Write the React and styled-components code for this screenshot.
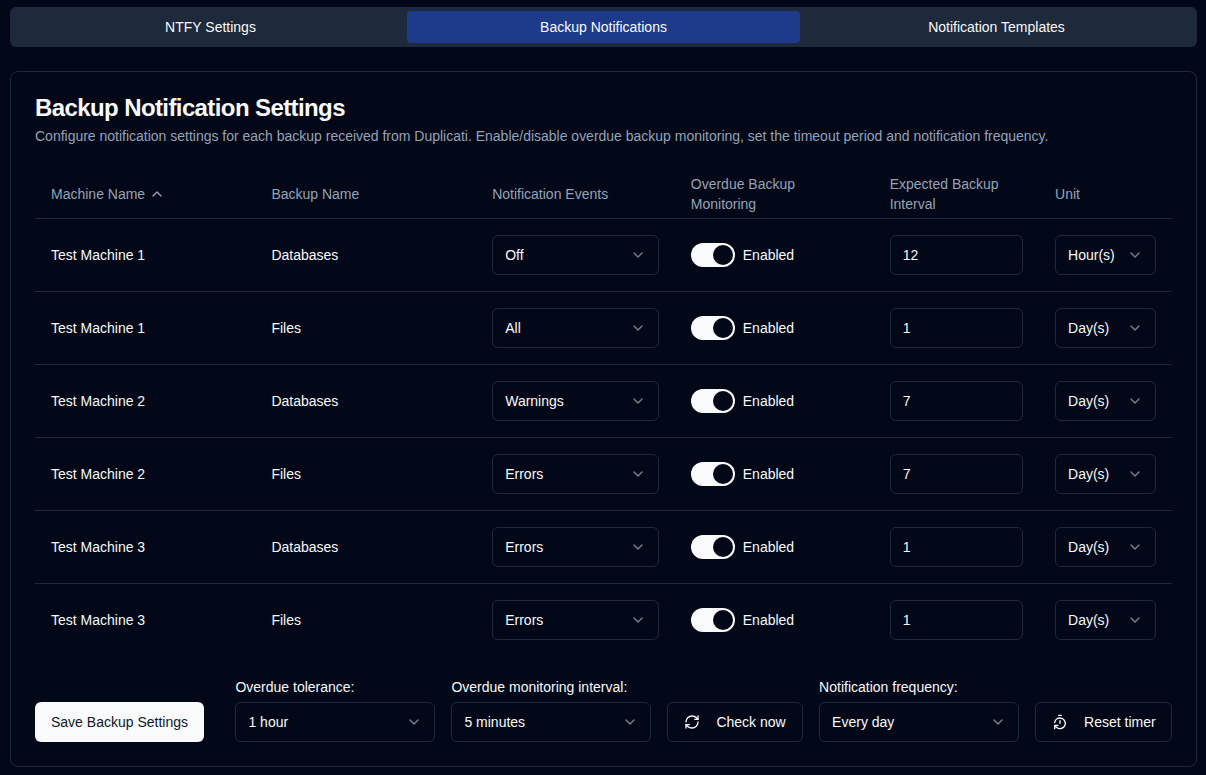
import React from "react";
import styled, { createGlobalStyle, ThemeProvider } from "styled-components";
import { ChevronDown, ChevronUp, RefreshCw, TimerReset } from "lucide-react";

const theme = {
  background: "#020817",
  foreground: "#f8fafc",
  muted: "#94a3b8",
  border: "#1e293b",
  tabs: "#1e293b",
  tabActive: "#1e3a8a",
  primary: "#f8fafc",
  primaryText: "#0f172a",
};

const GlobalStyle = createGlobalStyle`
  *, *::before, *::after { box-sizing: border-box; }
  body {
    margin: 0;
    overflow: hidden;
    background: ${theme.background};
    color: ${theme.foreground};
    font-family: "Liberation Sans", Arial, sans-serif;
    font-size: 14px;
    line-height: 20px;
  }
  button, input { font: inherit; color: inherit; }
  h1, p { margin: 0; }
`;

const Page = styled.main`
  display: flex;
  flex-direction: column;
  gap: 24px;
  width: 1206px;
  padding: 7px 9px 8px 10px;
`;

const Tabs = styled.nav`
  display: grid;
  grid-template-columns: repeat(3, 1fr);
  height: 40px;
  padding: 4px;
  border-radius: 6px;
  background: ${(p) => p.theme.tabs};
`;

const Tab = styled.button`
  border: 0;
  padding: 0 12px;
  border-radius: 4px;
  background: ${(p) => (p.$active ? p.theme.tabActive : "transparent")};
`;

const Card = styled.section`
  display: flex;
  flex-direction: column;
  padding: 24px;
  border: 1px solid ${(p) => p.theme.border};
  border-radius: 8px;
`;

const CardHeader = styled.header`
  display: flex;
  flex-direction: column;
  gap: 6px;
  padding-bottom: 24px;
`;

const Title = styled.h1`
  font-size: 24px;
  line-height: 24px;
  font-weight: 700;
  letter-spacing: -0.6px;
`;

const Description = styled.p`
  color: ${(p) => p.theme.muted};
  letter-spacing: -0.007px;
`;

const Row = styled.div`
  display: grid;
  grid-template-columns: 220.4px 220.8px 198.6px 198.9px 165.4px 1fr;
  align-items: center;
  border-bottom: 1px solid ${(p) => p.theme.border};
  &:last-child { border-bottom: 0; }
`;

const HeadRow = styled(Row)`
  height: 49px;
  color: ${(p) => p.theme.muted};
`;

const HeadCell = styled.div`
  display: flex;
  align-items: center;
  gap: 4px;
  padding: 0 16px;
`;

const Cell = styled.div`
  display: flex;
  align-items: center;
  gap: 8px;
  min-width: 0;
  padding: 16px;
`;

const SelectBox = styled.button`
  display: flex;
  align-items: center;
  justify-content: space-between;
  width: ${(p) => p.$width || "100%"};
  height: 40px;
  padding: 8px 12px;
  border: 1px solid ${(p) => p.theme.border};
  border-radius: 6px;
  background: transparent;
  white-space: nowrap;
  svg { opacity: 0.5; flex: none; }
`;

const NumberInput = styled.input`
  width: 100%;
  height: 40px;
  padding: 8px 12px;
  border: 1px solid ${(p) => p.theme.border};
  border-radius: 6px;
  background: transparent;
  outline: none;
`;

const SwitchTrack = styled.button`
  display: flex;
  flex: none;
  justify-content: flex-end;
  width: 44px;
  height: 24px;
  padding: 2px;
  border: 0;
  border-radius: 12px;
  background: ${(p) => p.theme.primary};
`;

const SwitchThumb = styled.span`
  width: 20px;
  height: 20px;
  border-radius: 50%;
  background: ${(p) => p.theme.background};
`;

const Footer = styled.footer`
  display: flex;
  align-items: flex-end;
  justify-content: space-between;
  padding-top: 24px;
`;

const FooterControls = styled.div`
  display: flex;
  align-items: flex-end;
  gap: 16px;
`;

const Field = styled.div`
  display: flex;
  flex-direction: column;
  gap: 8px;
`;

const Label = styled.label`
  line-height: 14px;
`;

const Button = styled.button`
  display: inline-flex;
  align-items: center;
  gap: 16px;
  width: ${(p) => p.$width || "auto"};
  height: 40px;
  padding: 8px 0 8px 16px;
  border: 1px solid ${(p) => p.theme.border};
  border-radius: 6px;
  background: transparent;
  white-space: nowrap;
`;

const PrimaryButton = styled(Button)`
  padding: 8px 16px;
  border: 0;
  background: ${(p) => p.theme.primary};
  color: ${(p) => p.theme.primaryText};
`;

const Select = ({ value, width }) => (
  <SelectBox type="button" $width={width}>
    <span>{value}</span>
    <ChevronDown size={16} />
  </SelectBox>
);

const backups = [
  ["Test Machine 1", "Databases", "Off", "12", "Hour(s)"],
  ["Test Machine 1", "Files", "All", "1", "Day(s)"],
  ["Test Machine 2", "Databases", "Warnings", "7", "Day(s)"],
  ["Test Machine 2", "Files", "Errors", "7", "Day(s)"],
  ["Test Machine 3", "Databases", "Errors", "1", "Day(s)"],
  ["Test Machine 3", "Files", "Errors", "1", "Day(s)"],
];

export default function App() {
  return (
    <ThemeProvider theme={theme}>
      <GlobalStyle />
      <Page>
        <Tabs>
          <Tab>NTFY Settings</Tab>
          <Tab $active>Backup Notifications</Tab>
          <Tab>Notification Templates</Tab>
        </Tabs>
        <Card>
          <CardHeader>
            <Title>Backup Notification Settings</Title>
            <Description>
              Configure notification settings for each backup received from Duplicati. Enable/disable
              overdue backup monitoring, set the timeout period and notification frequency.
            </Description>
          </CardHeader>
          <div>
            <HeadRow>
              <HeadCell>
                Machine Name <ChevronUp size={16} />
              </HeadCell>
              <HeadCell>Backup Name</HeadCell>
              <HeadCell>Notification Events</HeadCell>
              <HeadCell>Overdue Backup Monitoring</HeadCell>
              <HeadCell>Expected Backup Interval</HeadCell>
              <HeadCell>Unit</HeadCell>
            </HeadRow>
            {backups.map(([machine, backup, events, interval, unit]) => (
              <Row key={machine + backup}>
                <Cell>{machine}</Cell>
                <Cell>{backup}</Cell>
                <Cell>
                  <Select value={events} />
                </Cell>
                <Cell>
                  <SwitchTrack type="button" role="switch" aria-checked="true">
                    <SwitchThumb />
                  </SwitchTrack>
                  Enabled
                </Cell>
                <Cell>
                  <NumberInput defaultValue={interval} />
                </Cell>
                <Cell>
                  <Select value={unit} />
                </Cell>
              </Row>
            ))}
          </div>
          <Footer>
            <PrimaryButton>Save Backup Settings</PrimaryButton>
            <FooterControls>
              <Field>
                <Label>Overdue tolerance:</Label>
                <Select value="1 hour" width="200px" />
              </Field>
              <Field>
                <Label>Overdue monitoring interval:</Label>
                <Select value="5 minutes" width="200px" />
              </Field>
              <Button $width="135.7px">
                <RefreshCw size={16} />
                Check now
              </Button>
              <Field>
                <Label>Notification frequency:</Label>
                <Select value="Every day" width="200px" />
              </Field>
              <Button $width="136.9px">
                <TimerReset size={16} />
                Reset timer
              </Button>
            </FooterControls>
          </Footer>
        </Card>
      </Page>
    </ThemeProvider>
  );
}
